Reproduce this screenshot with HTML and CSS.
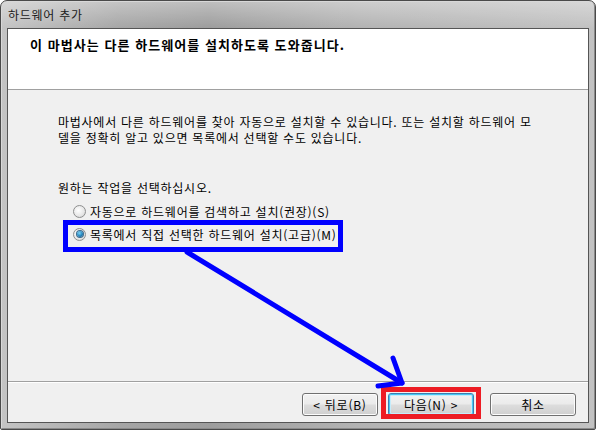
FILE: index.html
```html
<!DOCTYPE html>
<html lang="ko">
<head>
  <meta charset="UTF-8" />
  <title>하드웨어 추가</title>
  <link rel="stylesheet" href="styles.css">
</head>
<body>

<div class="window">
  <div class="titlebar">하드웨어 추가</div>

  <div class="client">
    <div class="header">
      <h1>이 마법사는 다른 하드웨어를 설치하도록 도와줍니다.</h1>
    </div>

    <div class="content">
      <p class="intro">마법사에서 다른 하드웨어를 찾아 자동으로 설치할 수 있습니다. 또는 설치할 하드웨어 모<br>델을 정확히 알고 있으면 목록에서 선택할 수도 있습니다.</p>
      <p class="prompt">원하는 작업을 선택하십시오.</p>
      <div class="radio"><span class="dot"></span>자동으로 하드웨어를 검색하고 설치(권장)(S)</div>
      <div class="radio checked"><span class="dot"></span>목록에서 직접 선택한 하드웨어 설치(고급)(M)</div>
    </div>

    <div class="footer">
      <button class="btn back">&lt; 뒤로(B)</button>
      <button class="btn next">다음(N) &gt;</button>
      <button class="btn cancel">취소</button>
    </div>
  </div>

  <!-- annotations drawn over the dialog -->
  <svg class="marks" width="596" height="430" viewBox="0 0 596 430">
    <rect x="65.5" y="222.5" width="275" height="27" fill="none" stroke="#0000ff" stroke-width="5" />
    <rect x="383.5" y="389.5" width="95" height="27" fill="none" stroke="#ed1c24" stroke-width="5" />
    <g fill="none" stroke="#0000ff" stroke-width="5" stroke-linecap="round" stroke-linejoin="round">
      <path d="M187 252 L402 383" />
      <path d="M393 358 L402 383 L378 386" />
    </g>
  </svg>
</div>

</body>
</html>
```

FILE: styles.css
```css
body {
  margin: 0;
  background: #ffffff;
  font-family: "Noto Sans CJK KR", "Noto Sans", sans-serif;
  font-size: 12px;
  letter-spacing: 0.75px;
  color: #000;
}

.window {
  position: relative;
  width: 596px;
  height: 430px;
  box-sizing: border-box;
  border: 1px solid #4a4a4a;
  border-radius: 7px 7px 2px 2px;
  padding: 0 6px 6px 6px;
  display: flex;
  flex-direction: column;
  background:
    linear-gradient(180deg, rgba(255, 255, 255, 0.35), rgba(255, 255, 255, 0) 27px),
    linear-gradient(90deg, #c4c4c4 0%, #a6a6a6 20%, #9d9d9d 35%, #b3b3b3 60%, #bcbcbc 85%, #c2c2c2 100%);
  box-shadow: inset 1px 1px 0 #d8d8d8, inset -1px -1px 0 #8a8a8a;
}

.titlebar {
  height: 27px;
  line-height: 27px;
  padding-left: 1px;
  font-size: 12px;
  color: #1a1a1a;
}

.client {
  flex: 1;
  display: flex;
  flex-direction: column;
  border: 1px solid #555555;
  background: #f0f0f0;
}

.header {
  height: 60px;
  background: #ffffff;
  border-bottom: 1px solid #a0a0a0;
}

.header h1 {
  margin: 0;
  padding: 8px 0 0 22px;
  font-size: 13px;
  font-weight: bold;
  letter-spacing: 1.05px;
  line-height: 16px;
}

.content {
  flex: 1;
  padding: 24px 0 0 50px;
}

.intro {
  margin: 0;
  line-height: 16px;
  white-space: nowrap;
}

.prompt {
  margin: 34px 0 7px 0;
  line-height: 16px;
}

.radio {
  display: flex;
  align-items: center;
  height: 16px;
  margin: 0 0 7px 15px;
}

.dot {
  width: 11px;
  height: 11px;
  border: 1px solid #8e8f8f;
  border-radius: 50%;
  margin-right: 4px;
  background: radial-gradient(circle at 40% 40%, #ffffff 0%, #e6e6e6 60%, #c9c9c9 100%);
  display: flex;
  align-items: center;
  justify-content: center;
}

.checked .dot::after {
  content: "";
  width: 6px;
  height: 6px;
  border-radius: 50%;
  background: radial-gradient(circle at 40% 35%, #7fd3f5 0%, #2a8cc4 50%, #0f4774 100%);
  box-shadow: 0 0 0 1px #3c6a8c;
}

.footer {
  height: 41px;
  border-top: 1px solid #a0a0a0;
  box-shadow: inset 0 1px 0 #ffffff;
  display: flex;
  align-items: flex-start;
  padding: 11px 12px 0 0;
  box-sizing: border-box;
  justify-content: flex-end;
}

.btn {
  height: 23px;
  padding: 0;
  font-family: inherit;
  font-size: 12px;
  letter-spacing: 0.75px;
  color: #000;
  border: 1px solid #707070;
  border-radius: 3px;
  background: linear-gradient(180deg, #f2f2f2 0%, #ebebeb 48%, #dddddd 52%, #cfcfcf 100%);
  box-shadow: inset 0 0 0 1px #fcfcfc;
}

.back {
  width: 76px;
}

.next {
  width: 86px;
  margin-left: 10px;
  border-color: #3c7fb1;
  box-shadow: inset 0 0 0 1px #48c5f2, inset 0 0 0 2px #c5ecfb;
}

.cancel {
  width: 86px;
  margin-left: 16px;
}

.marks {
  position: absolute;
  left: -1px;
  top: -1px;
  pointer-events: none;
}
```
